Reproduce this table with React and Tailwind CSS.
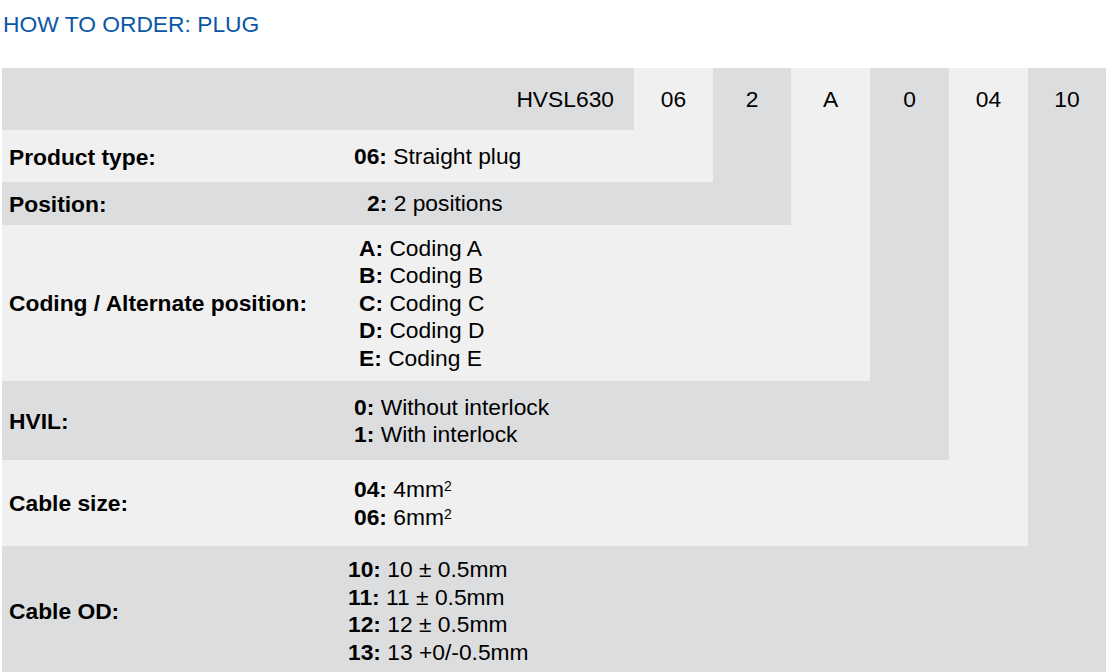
import React from "react";

const D = "bg-[#dcdddf]";
const L = "bg-[#f0f0f0]";

function Line({ code, children }) {
  return (
    <div className="whitespace-nowrap">
      <span className="font-bold">{code}:</span> {children}
    </div>
  );
}

function Sq({ n }) {
  return (
    <>
      {n}mm<sup className="text-[14px] relative top-[-6px]">2</sup>
    </>
  );
}

function Row({ span, bg, label, valueClass, h, children, rest }) {
  const spanCls = {
    2: "col-span-2",
    3: "col-span-3",
    4: "col-span-4",
    5: "col-span-5",
    6: "col-span-6",
    7: "col-span-7",
  }[span];
  return (
    <>
      <div className={`${spanCls} ${bg} ${h} flex items-center`}>
        <div className="w-[346px] pl-[7px] font-bold">{label}</div>
        <div className={`${valueClass} leading-[27.5px]`}>{children}</div>
      </div>
      {rest.map((c, i) => (
        <div key={i} className={c} />
      ))}
    </>
  );
}

export default function App() {
  return (
    <div
      className="w-[1107px] h-[672px] overflow-hidden bg-white text-[22.8px] text-black"
      style={{ fontFamily: '"Liberation Sans", Arial, sans-serif' }}
    >
      <div className="pt-[12px] pl-[3px] leading-[25px] text-[#0b57a6]">
        HOW TO ORDER: PLUG
      </div>
      <div className="mt-[31px] ml-[2px] grid grid-cols-[632px_79px_78px_79px_79px_79px_78px]">
        <div className={`${D} h-[62px] flex items-center justify-end pr-[20px]`}>HVSL630</div>
        <div className={`${L} h-[62px] flex items-center justify-center`}>06</div>
        <div className={`${D} h-[62px] flex items-center justify-center`}>2</div>
        <div className={`${L} h-[62px] flex items-center justify-center`}>A</div>
        <div className={`${D} h-[62px] flex items-center justify-center`}>0</div>
        <div className={`${L} h-[62px] flex items-center justify-center`}>04</div>
        <div className={`${D} h-[62px] flex items-center justify-center`}>10</div>

        <Row span={2} bg={L} h="h-[52px] pt-[2px]" label="Product type:" valueClass="ml-[6px]" rest={[D, L, D, L, D]}>
          <Line code="06">Straight plug</Line>
        </Row>

        <Row span={3} bg={D} h="h-[43px] pt-[1px]" label="Position:" valueClass="ml-[19px]" rest={[L, D, L, D]}>
          <Line code="2">2 positions</Line>
        </Row>

        <Row span={4} bg={L} h="h-[156px] pt-[1px]" label="Coding / Alternate position:" valueClass="ml-[11px]" rest={[D, L, D]}>
          <Line code="A">Coding A</Line>
          <Line code="B">Coding B</Line>
          <Line code="C">Coding C</Line>
          <Line code="D">Coding D</Line>
          <Line code="E">Coding E</Line>
        </Row>

        <Row span={5} bg={D} h="h-[79px] pt-[1px]" label="HVIL:" valueClass="ml-[6px]" rest={[L, D]}>
          <Line code="0">Without interlock</Line>
          <Line code="1">With interlock</Line>
        </Row>

        <Row span={6} bg={L} h="h-[86px] pt-[1px]" label="Cable size:" valueClass="ml-[6px]" rest={[D]}>
          <Line code="04"><Sq n="4" /></Line>
          <Line code="06"><Sq n="6" /></Line>
        </Row>

        <Row span={7} bg={D} h="h-[126px] pt-[4px]" label="Cable OD:" valueClass="ml-0" rest={[]}>
          <Line code="10">10 ± 0.5mm</Line>
          <Line code="11">11 ± 0.5mm</Line>
          <Line code="12">12 ± 0.5mm</Line>
          <Line code="13">13 +0/-0.5mm</Line>
        </Row>
      </div>
    </div>
  );
}
